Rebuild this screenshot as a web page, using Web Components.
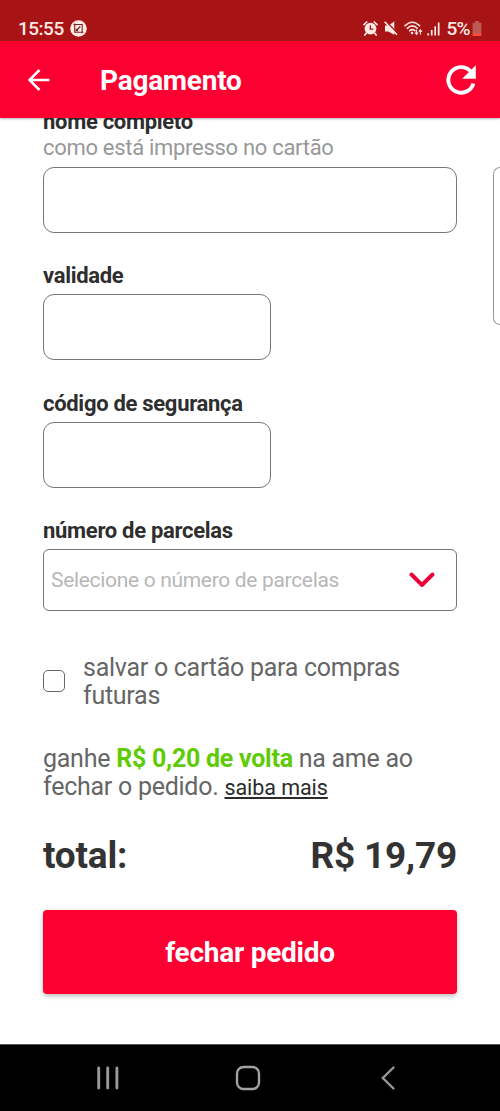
<!DOCTYPE html>
<html lang="pt-BR">
<head>
<meta charset="utf-8">
<title>Pagamento</title>
<style>
html,body{margin:0;padding:0;background:#fff}
body{width:500px;height:1111px;overflow:hidden;font-family:Roboto,"Noto Sans",sans-serif;color:#2e2e2e}
</style>
</head>
<body>
<payment-screen></payment-screen>
<script>
function define(name, html) {
  const template = document.createElement('template');
  template.innerHTML = html;
  customElements.define(name, class extends HTMLElement {
    constructor() {
      super();
      this.attachShadow({ mode: 'open' }).appendChild(template.content.cloneNode(true));
    }
  });
}

define('status-bar', `
<style>
:host{display:flex;box-sizing:border-box;height:41px;flex:none;background:#a81315;color:#ffeae4;padding:17px 18px 0 18px;align-items:flex-start}
span{font-size:19px;line-height:24px;font-weight:500;letter-spacing:-.5px;white-space:nowrap}
svg{display:block;flex:none}
.shot{margin:3px 0 0 6px}
.alarm{margin:4px 6px 0 auto}
.mute{margin:4px 6px 0 0}
.wifi{margin:4px 4px 0 0}
.signal{margin:5px 6px 0 0}
.battery{margin:4px 0 0 2px}
.pct{letter-spacing:-.6px}
</style>
<span>15:55</span>
<svg class="shot" width="17" height="17" viewBox="0 0 17 17"><circle cx="8.5" cy="8.5" r="8.3" fill="#ffeae4"/><path d="M3.5 4.5h8.7v8.8M4.7 3.6v8.6h8.7M6.3 10.5l4-4M6.3 8.8v1.8h1.8" fill="none" stroke="#7d2022" stroke-width="1.1"/></svg>
<svg class="alarm" width="15" height="15" viewBox="0 0 15 15"><circle cx="7.5" cy="7.6" r="5.9" fill="#ffeae4"/><path d="M1 3.6L3.7 1M14 3.6L11.3 1M3.2 12.2L1.8 14M11.8 12.2l1.4 1.8" stroke="#ffeae4" stroke-width="1.7" stroke-linecap="round"/><path d="M7.3 4.2v3.9h3" fill="none" stroke="#a81315" stroke-width="1.3"/></svg>
<svg class="mute" width="14" height="15" viewBox="0 0 14 15"><path d="M1 4.6h3.2L10.3.5v13.2L4.3 10.4H1z" fill="#ffeae4"/><path d="M2 .1l12 13" stroke="#a81315" stroke-width="1.6"/><path d="M.7 .8l12.3 13" stroke="#ffeae4" stroke-width="1.6"/></svg>
<svg class="wifi" width="19" height="15" viewBox="0 0 19 15"><path d="M1 4.8Q8.3-2.3 15.6 4.8M3.3 7.3q5-4.7 10 0M5.7 9.7q2.6-2.2 5.2 0" fill="none" stroke="#ffeae4" stroke-width="1.6" stroke-linecap="round"/><circle cx="8" cy="12" r="1.3" fill="#ffeae4"/><path d="M12.5 8.8v4.4M10.9 11.5l1.6 1.8 1.6-1.8M16.4 13.5V9M14.8 10.7l1.6-1.8 1.6 1.8" fill="none" stroke="#ffeae4" stroke-width="1.1"/></svg>
<svg class="signal" width="13" height="14" viewBox="0 0 13 14"><path d="M1.2 13.4v-2.2M4.7 13.4V7.9M8.2 13.4V4.2M11.7 13.4V.5" stroke="#ffeae4" stroke-width="1.7"/></svg>
<span class="pct">5%</span>
<svg class="battery" width="10" height="15" viewBox="0 0 10 15"><path d="M3 0h4v1.7h2.4v11.4H.6V1.7H3z" fill="#bb5a55"/><path d="M.6 12.6h8.8V15H.6z" fill="#ff4b35"/></svg>
`);

define('app-bar', `
<style>
:host{display:flex;box-sizing:border-box;height:77px;flex:none;align-items:center;background:#fb0030;color:#fff;padding:0 23px 0 27px;box-shadow:0 1px 2px rgba(0,0,0,.3);position:relative;z-index:2}
svg{display:block;flex:none}
h1{margin:2px auto 0 49px;font-size:28px;line-height:36px;font-weight:700;letter-spacing:-.25px}
</style>
<svg width="24" height="24" viewBox="0 0 24 24"><path d="M22.5 12H2.5M12.5 2L2.5 12l10 10" fill="none" stroke="#fff" stroke-width="2.5"/></svg>
<h1><slot></slot></h1>
<svg width="32" height="32" viewBox="0 0 32 32"><path d="M28.4 19.5A12.8 12.8 0 1 1 25.7 7.4" fill="none" stroke="#fff" stroke-width="3.9"/><path d="M30.8 1.3v13.4H17.2z" fill="#fff"/></svg>
`);

define('form-field', `
<style>
:host{display:block}
label{display:block;font-size:22px;line-height:26px;font-weight:700;white-space:nowrap;letter-spacing:-.3px}
.hint{font-size:22px;line-height:26px;color:#989898;letter-spacing:-.3px;white-space:nowrap;display:block}
.box{box-sizing:border-box;width:var(--w,100%);height:66px;border:1px solid #777;border-radius:11px;margin-top:var(--gap,5px)}
</style>
<label><slot></slot></label><slot name="hint" class="hint"></slot><div class="box"></div>
`);

define('select-field', `
<style>
:host{display:block}
label{display:block;font-size:22px;line-height:26px;font-weight:700;white-space:nowrap;letter-spacing:-.3px}
.box{box-sizing:border-box;height:62px;border:1px solid #777;border-radius:6px;margin-top:5px;display:flex;align-items:center;justify-content:space-between;padding:0 21px 0 7px;font-size:21px;letter-spacing:-.32px;color:#b7b7b7;white-space:nowrap}
svg{display:block}
</style>
<label><slot></slot></label>
<div class="box"><slot name="placeholder"></slot><svg width="26" height="16" viewBox="0 0 26 16"><path d="M2.5 2.5L13 13 23.5 2.5" fill="none" stroke="#ed0038" stroke-width="3.9" stroke-linecap="round" stroke-linejoin="round"/></svg></div>
`);

define('check-row', `
<style>
:host{display:flex;align-items:center;font-size:25px;line-height:28.5px;color:#666;letter-spacing:-.27px}
i{box-sizing:border-box;width:22px;height:22px;border:1.5px solid #666;border-radius:5px;flex:none;margin:-2px 18px 0 0}
</style><i></i><div><slot></slot></div>`);

define('cashback-note', `
<style>
:host{display:block;font-size:25px;line-height:28.5px;color:#666;white-space:nowrap;letter-spacing:-.26px}
::slotted(b){color:#5fcb05}
::slotted(u){color:#2b2b2b;font-size:21.5px;letter-spacing:-.07px;text-underline-offset:2px;text-decoration-thickness:1.5px;text-decoration-skip-ink:none}
</style><slot></slot>`);

define('total-row', `
<style>
:host{display:flex;justify-content:space-between;font-size:37px;line-height:44px;font-weight:700;color:#333;white-space:nowrap;letter-spacing:-.2px}
</style><slot name="label"></slot><slot name="value"></slot>`);

define('primary-button', `
<style>
:host{display:block}
button{display:block;width:100%;height:84px;border:0;border-radius:4px;background:#fb0030;color:#fff;font:700 28px/32px Roboto,sans-serif;letter-spacing:-.25px;box-shadow:0 2px 5px rgba(0,0,0,.28);padding:2px 0 0}
</style><button><slot></slot></button>`);

define('nav-bar', `
<style>
:host{display:flex;box-sizing:border-box;height:67px;flex:none;background:#000;border-top:1px solid #555;align-items:center;padding-left:95px}
svg{display:block}
.home{margin:0 119px 0 113.5px}
</style>
<svg width="26" height="26" viewBox="0 0 26 26"><path d="M3.7 3v20M12.7 3v20M21.9 3v20" stroke="#999" stroke-width="2.9" stroke-linecap="round"/></svg>
<svg class="home" width="26" height="26" viewBox="0 0 26 26"><rect x="2" y="2" width="22" height="22" rx="6.5" fill="none" stroke="#a3a3a3" stroke-width="2.4"/></svg>
<svg width="16" height="26" viewBox="0 0 16 26"><path d="M13.5 2.5L2.8 13l10.7 10.5" fill="none" stroke="#999" stroke-width="2.4" stroke-linecap="round"/></svg>
`);

define('payment-screen', `
<style>
:host{display:flex;flex-direction:column;width:500px;height:1111px;overflow:hidden;background:#fff}
main{flex:1;min-height:0;overflow:hidden;display:grid;grid-template-columns:414px 1fr;padding-left:43px}
form{margin-top:-9px}
.full{--gap:6px}
.short{--w:228px}
form-field + form-field,form-field + select-field{margin-top:30.4px}
check-row{margin-top:42.8px}
cashback-note{margin-top:34px}
total-row{margin-top:31px}
primary-button{margin-top:32px}
aside{margin:49px 0 0 36px;height:158px;box-sizing:border-box;border:1px solid #999;border-right:0;border-radius:7px 0 0 7px}
</style>
<status-bar></status-bar>
<app-bar>Pagamento</app-bar>
<main>
<form>
<form-field class="full">nome completo<span slot="hint">como está impresso no cartão</span></form-field>
<form-field class="short">validade</form-field>
<form-field class="short">código de segurança</form-field>
<select-field>número de parcelas<span slot="placeholder">Selecione o número de parcelas</span></select-field>
<check-row>salvar o cartão para compras<br>futuras</check-row>
<cashback-note>ganhe <b>R$ 0,20 de volta</b> na ame ao<br>fechar o pedido. <u>saiba mais</u></cashback-note>
<total-row><span slot="label">total:</span><span slot="value">R$ 19,79</span></total-row>
<primary-button>fechar pedido</primary-button>
</form>
<aside></aside>
</main>
<nav-bar></nav-bar>
`);
</script>
</body>
</html>
